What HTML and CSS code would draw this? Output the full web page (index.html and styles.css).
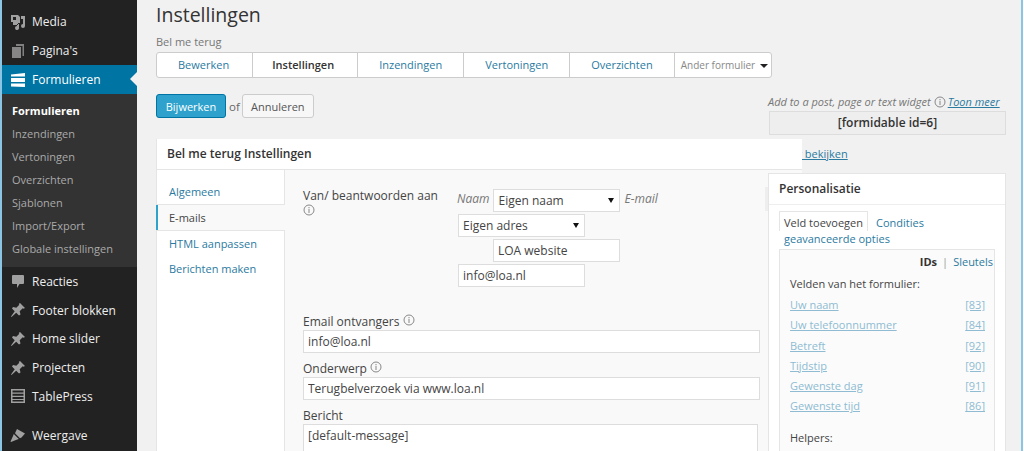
FILE: index.html
```html
<!DOCTYPE html>
<html lang="nl">
<head>
  <meta charset="UTF-8" />
  <title>Instellingen</title>
  <link rel="stylesheet" href="styles.css">
</head>
<body>

  <svg class="sprites" width="0" height="0">
    <symbol id="ico-media" viewBox="0 0 16 16"><path fill-rule="evenodd" d="M1 1h7l2 2v6H8v2H3V8H1zM3 3v3h3V3zM11 2h4v10a2 2 0 1 1-2-2V5h-2zM9 10v3.500a2 2 0 1 1-2-1.500v-2z"/></symbol>
    <symbol id="ico-page" viewBox="0 0 16 16"><path d="M6 1h8v12h-1.500V3H6z" opacity=".75"/><path d="M2 4h9v11H2z" opacity=".8"/></symbol>
    <symbol id="ico-forms" viewBox="0 0 16 16"><path d="M1 2.500L15 1v3.500H1zM1 6h14v4H1zM1 11.500h14V15L1 14.500z"/></symbol>
    <symbol id="ico-comment" viewBox="0 0 16 16"><path d="M3 2h10a1 1 0 0 1 1 1v7a1 1 0 0 1-1 1H9.500L7 15v-4H3a1 1 0 0 1-1-1V3a1 1 0 0 1 1-1z"/></symbol>
    <symbol id="ico-pin" viewBox="0 0 16 16"><path d="M10 1l5 5-1.500.8-.8-.6-3 3 .8 3.300-1.500 1-2.800-2.800L1.500 15 1 14.500l3.700-5.200L2 6.500l1-1.500 3.300.8 3-3-.6-.8z"/></symbol>
    <symbol id="ico-table" viewBox="0 0 16 16"><path fill-rule="evenodd" d="M1 1h14v14H1zM2.500 2.500v2h11v-2zm0 3.200v2h11v-2zm0 3.200v2h11v-2zm0 3.200v1.400h11v-1.400z"/></symbol>
    <symbol id="ico-brush" viewBox="0 0 16 16"><path d="M7 2l8 4.500-3.500 4-1.500.8-5-5zM3.800 7l5 5-2.300.8L1 15l-.5-.5 2.300-5z"/></symbol>
    <symbol id="ico-info" viewBox="0 0 12 12"><circle cx="6" cy="6" r="5" fill="none" stroke="currentColor"/><path d="M5.500 3h1v1.200h-1zM5.500 5h1v4h-1z"/></symbol>
  </svg>

  <div class="wrap">
    <nav class="sidebar">
      <ul class="menu">
        <li class="menu-item"><svg class="menu-ico"><use href="#ico-media"/></svg>Media</li>
        <li class="menu-item"><svg class="menu-ico"><use href="#ico-page"/></svg>Pagina's</li>
        <li class="menu-item current"><svg class="menu-ico"><use href="#ico-forms"/></svg>Formulieren</li>
      </ul>
      <ul class="submenu">
        <li class="active">Formulieren</li>
        <li>Inzendingen</li>
        <li>Vertoningen</li>
        <li>Overzichten</li>
        <li>Sjablonen</li>
        <li>Import/Export</li>
        <li>Globale instellingen</li>
      </ul>
      <ul class="menu lower">
        <li class="menu-item"><svg class="menu-ico"><use href="#ico-comment"/></svg>Reacties</li>
        <li class="menu-item"><svg class="menu-ico"><use href="#ico-pin"/></svg>Footer blokken</li>
        <li class="menu-item"><svg class="menu-ico"><use href="#ico-pin"/></svg>Home slider</li>
        <li class="menu-item"><svg class="menu-ico"><use href="#ico-pin"/></svg>Projecten</li>
        <li class="menu-item"><svg class="menu-ico"><use href="#ico-table"/></svg>TablePress</li>
        <li class="menu-item sep"><svg class="menu-ico"><use href="#ico-brush"/></svg>Weergave</li>
      </ul>
    </nav>

    <main class="content">
      <h1 class="page-title">Instellingen</h1>
      <div class="form-name">Bel me terug</div>

      <div class="tabs">
        <a class="tab first">Bewerken</a>
        <a class="tab selected">Instellingen</a>
        <a class="tab">Inzendingen</a>
        <a class="tab">Vertoningen</a>
        <a class="tab">Overzichten</a>
        <a class="tab other">Ander formulier <span class="caret"></span></a>
      </div>

      <div class="columns">
        <div class="col-main">
          <div class="actions">
            <button class="btn primary">Bijwerken</button>
            <span class="or">of</span>
            <button class="btn">Annuleren</button>
          </div>

          <section class="card">
            <h2 class="card-title">Bel me terug Instellingen</h2>
            <div class="card-body">
              <ul class="side-tabs">
                <li>Algemeen</li>
                <li class="on">E-mails</li>
                <li>HTML aanpassen</li>
                <li>Berichten maken</li>
              </ul>

              <div class="panel">
                <div class="reply-row">
                  <div class="reply-label">Van/ beantwoorden aan <svg class="info block"><use href="#ico-info"/></svg></div>
                  <div class="reply-fields">
                    <div class="line">
                      <em class="hint">Naam</em>
                      <div class="fake-select wide">Eigen naam<span class="arrow"></span></div>
                      <em class="hint">E-mail</em>
                    </div>
                    <div class="line">
                      <div class="fake-select narrow">Eigen adres<span class="arrow"></span></div>
                    </div>
                    <div class="line indent">
                      <input class="text wide" value="LOA website">
                    </div>
                    <div class="line">
                      <input class="text narrow" value="info@loa.nl">
                    </div>
                  </div>
                </div>

                <label class="field-label first">Email ontvangers <svg class="info"><use href="#ico-info"/></svg></label>
                <input class="text full" value="info@loa.nl">
                <label class="field-label">Onderwerp <svg class="info"><use href="#ico-info"/></svg></label>
                <input class="text full" value="Terugbelverzoek via www.loa.nl">
                <label class="field-label">Bericht</label>
                <textarea class="text full area">[default-message]</textarea>
              </div>
            </div>
          </section>
        </div>

        <aside class="col-side">
          <div class="shortcode-hint"><em>Add to a post, page or text widget</em><svg class="info"><use href="#ico-info"/></svg><a class="more">Toon meer</a></div>
          <div class="shortcode">[formidable id=6]</div>
          <div class="preview"><a>Formulier bekijken</a></div>

          <div class="widget">
            <h3 class="widget-title">Personalisatie</h3>
            <div class="widget-body">
              <div class="widget-tabs">
                <span class="wtab on">Veld toevoegen</span><span class="wtab">Condities</span>
                <span class="wtab last">geavanceerde opties</span>
              </div>
              <div class="fields-box">
                <div class="id-toggle"><b>IDs</b><span class="bar">|</span><a>Sleutels</a></div>
                <p class="box-head">Velden van het formulier:</p>
                <ul class="field-list">
                  <li><a>Uw naam</a><a>[83]</a></li>
                  <li><a>Uw telefoonnummer</a><a>[84]</a></li>
                  <li><a>Betreft</a><a>[92]</a></li>
                  <li><a>Tijdstip</a><a>[90]</a></li>
                  <li><a>Gewenste dag</a><a>[91]</a></li>
                  <li><a>Gewenste tijd</a><a>[86]</a></li>
                </ul>
                <p class="box-head helpers">Helpers:</p>
              </div>
            </div>
          </div>
        </aside>
      </div>
    </main>
  </div>

</body>
</html>
```

FILE: styles.css
```css
html, body {
  margin: 0;
  height: 451px;
  overflow: hidden;
}

body {
  font-family: "Open Sans", sans-serif;
  font-size: 12px;
  color: #444;
  background: #fff;
}

ul {
  list-style: none;
  margin: 0;
  padding: 0;
}

a {
  color: #2b7a9f;
}

.sprites {
  position: absolute;
}

.wrap {
  display: flex;
  box-sizing: border-box;
  width: 1023px;
  height: 451px;
  background: #f1f1f1;
  border-left: 2px solid #8cc4e4;
  border-right: 2px solid #8cc4e4;
  overflow: hidden;
}

/* admin menu */
.sidebar {
  width: 135px;
  flex: none;
  background: #222;
  padding-top: 7px;
}

.menu-item {
  display: flex;
  align-items: center;
  box-sizing: border-box;
  height: 29px;
  padding-left: 8px;
  font-size: 12px;
  color: #eee;
}

.lower .menu-item {
  height: 28.750px;
}

.menu-ico {
  width: 16px;
  height: 16px;
  margin-right: 6px;
  fill: #a0a0a0;
  flex: none;
}

.menu-item.current {
  background: #0074a2;
  color: #fff;
  position: relative;
}

.menu-item.current .menu-ico {
  fill: #fff;
}

.menu-item.current::after {
  content: "";
  position: absolute;
  right: 0;
  top: 7px;
  border: 7px solid transparent;
  border-right-color: #f1f1f1;
  border-left-width: 0;
}

.menu-item.sep {
  margin-top: 10px;
}

.submenu {
  background: #333;
  padding: 5px 0 7px 10px;
  font-size: 11px;
  color: #aaa;
}

.submenu li {
  height: 23px;
  line-height: 23px;
}

.submenu .active {
  color: #fff;
  font-weight: 700;
}

/* page */
.content {
  flex: 1;
  min-width: 0;
  padding-left: 19px;
}

.page-title {
  margin: 0;
  font-size: 19.500px;
  font-weight: 400;
  line-height: 30px;
  color: #333;
}

.form-name {
  margin-top: 4px;
  font-size: 11px;
  line-height: 15px;
  color: #777;
}

.tabs {
  display: flex;
  width: fit-content;
  margin-top: 3px;
  height: 24px;
  background: #fff;
  border: 1px solid #ccc;
  border-radius: 3px;
  font-size: 11px;
  line-height: 24px;
  white-space: nowrap;
}

.tab {
  padding: 0 21px;
  border-right: 1px solid #ccc;
}

.tab.first {
  padding-right: 23px;
}

.tab.selected {
  padding: 0 23px 0 19px;
  color: #333;
  font-weight: 600;
}

.tab.other {
  padding: 0 3px 0 6px;
  border-right: 0;
  font-size: 10px;
  color: #888;
}

.caret {
  display: inline-block;
  margin-left: 2px;
  border: 4px solid transparent;
  border-top-color: #222;
  border-bottom-width: 0;
  vertical-align: 1px;
}

.columns {
  display: flex;
  align-items: flex-start;
}

.col-main {
  width: 646px;
  flex: none;
}

.actions {
  display: flex;
  align-items: center;
  gap: 3px;
  margin-top: 16px;
}

.btn {
  font: 11px "Open Sans", sans-serif;
  height: 24px;
  width: 72px;
  padding: 0;
  color: #555;
  background: #f7f7f7;
  border: 1px solid #ccc;
  border-radius: 3px;
}

.btn.primary {
  width: 70px;
  background: #2ea2cc;
  border-color: #0074a2;
  color: #fff;
}

.or {
  margin-right: -1px;
  color: #666;
  font-size: 11.500px;
}

.card {
  margin-top: 21px;
  width: 646px;
}

.card-title {
  position: relative;
  z-index: 2;
  margin: 0;
  height: 30px;
  line-height: 30px;
  padding-left: 10px;
  font-size: 12px;
  font-weight: 600;
  color: #333;
  background: #fff;
  border-left: 1px solid #e5e5e5;
  border-bottom: 1px solid #e5e5e5;
}

.card-body {
  display: flex;
  height: 282px;
  background: #f9f9f9;
  overflow: hidden;
}

.side-tabs {
  box-sizing: border-box;
  width: 129px;
  flex: none;
  padding-top: 9px;
  background: #fff;
  border-left: 1px solid #e5e5e5;
  border-right: 1px solid #e5e5e5;
  font-size: 11px;
  color: #2b7a9f;
}

.side-tabs li {
  height: 25px;
  line-height: 25px;
  padding-left: 12px;
}

.side-tabs .on {
  margin: 0 -1px;
  color: #444;
  background: #f9f9f9;
  border-top: 1px solid #e5e5e5;
  border-bottom: 1px solid #e5e5e5;
  box-shadow: inset 2px 0 0 #2ea2cc;
  padding-left: 13px;
}

.panel {
  flex: 1;
  padding: 18px 0 0 18px;
  width: 460px;
}

.reply-row {
  display: flex;
  height: 125px;
}

.reply-label {
  width: 155px;
  flex: none;
  line-height: 16px;
}

.reply-fields {
  padding-top: 1px;
}

.reply-fields .line {
  display: flex;
  align-items: center;
  gap: 4px;
  margin-bottom: 2px;
  height: 23px;
}

.reply-fields .indent {
  padding-left: 35px;
}

.hint {
  margin-bottom: 4px;
  font-size: 12px;
  color: #777;
}

.hint:first-child {
  margin-left: -1px;
}

.fake-select, .text {
  box-sizing: border-box;
  height: 23px;
  padding: 0 4px;
  font: 12px "Open Sans", sans-serif;
  color: #444;
  background: #fff;
  border: 1px solid #ddd;
}

.fake-select {
  display: flex;
  align-items: center;
  justify-content: space-between;
  padding-right: 5px;
}

.arrow {
  border: 3.500px solid transparent;
  border-top: 5px solid #111;
  border-bottom-width: 0;
}

.wide {
  width: 127px;
}

.narrow {
  width: 127px;
}

.field-label {
  display: block;
  line-height: 17px;
  margin-top: 7px;
}

.field-label.first {
  margin-top: 0;
}

.full {
  display: block;
  width: 457px;
}

.area {
  width: 455px;
  height: 50px;
  padding-top: 2px;
  resize: none;
}

.info {
  width: 12px;
  height: 12px;
  fill: #888;
  color: #888;
}

.info.block {
  display: block;
}

/* right column */
.col-side {
  position: relative;
  z-index: 1;
  width: 238px;
  flex: none;
  margin-left: -34px;
  padding-top: 16px;
}

.shortcode-hint {
  font-size: 11px;
  color: #777;
  line-height: 15px;
  white-space: nowrap;
}

.shortcode-hint .info {
  margin: 0 2px 0 3px;
  vertical-align: -2px;
}

.more {
  font-style: italic;
  text-decoration: underline;
}

.shortcode {
  margin-top: 2px;
  margin-left: 1px;
  height: 22px;
  line-height: 22px;
  font-size: 12px;
  font-weight: 600;
  color: #333;
  text-align: center;
  background: #eee;
  border: 1px solid #ddd;
}

.preview {
  margin: 11px 0 0 -16px;
  height: 16px;
  line-height: 16px;
  font-size: 11px;
}

.preview a {
  text-decoration: underline;
}

.widget {
  position: relative;
  margin-top: 11px;
  background: #fff;
  border: 1px solid #e5e5e5;
  height: 277px;
}

/* grey handle poking out of the panel next to the widget */
.widget::before {
  content: "";
  position: absolute;
  left: -4px;
  top: 13px;
  width: 3px;
  height: 24px;
  background: #eee;
}

.widget-title {
  margin: 0;
  height: 30px;
  line-height: 29px;
  padding-left: 10px;
  font-size: 12px;
  font-weight: 600;
  color: #333;
  border-bottom: 1px solid #eee;
}

.widget-body {
  padding: 6px 10px 0 10px;
  height: 240px;
  overflow: hidden;
}

.widget-tabs {
  font-size: 11px;
  line-height: 16px;
  color: #2b7a9f;
}

.wtab {
  display: inline-block;
  padding: 0 4px;
}

.wtab.on {
  color: #444;
  border: 1px solid #e5e5e5;
  border-bottom: 0;
  margin-right: 4px;
  padding-top: 3px;
}

.wtab.last {
  padding-left: 5px;
  margin-top: -1px;
}

.fields-box {
  margin-top: 2px;
  background: #fbfbfb;
  border: 1px solid #e5e5e5;
  height: 250px;
  font-size: 11px;
}

.id-toggle {
  text-align: right;
  padding: 4px 1px 0 0;
  line-height: 16px;
}

.id-toggle b {
  color: #333;
}

.bar {
  margin: 0 5px;
  color: #999;
}

.box-head {
  margin: 6px 0 0 10px;
  line-height: 16px;
}

.field-list {
  margin: 3px 9px 0 10px;
}

.field-list li {
  display: flex;
  justify-content: space-between;
  height: 20.300px;
  line-height: 20px;
}

.field-list a {
  color: #8fbcd2;
  text-decoration: underline;
}

.helpers {
  margin-top: 13px;
}
```
